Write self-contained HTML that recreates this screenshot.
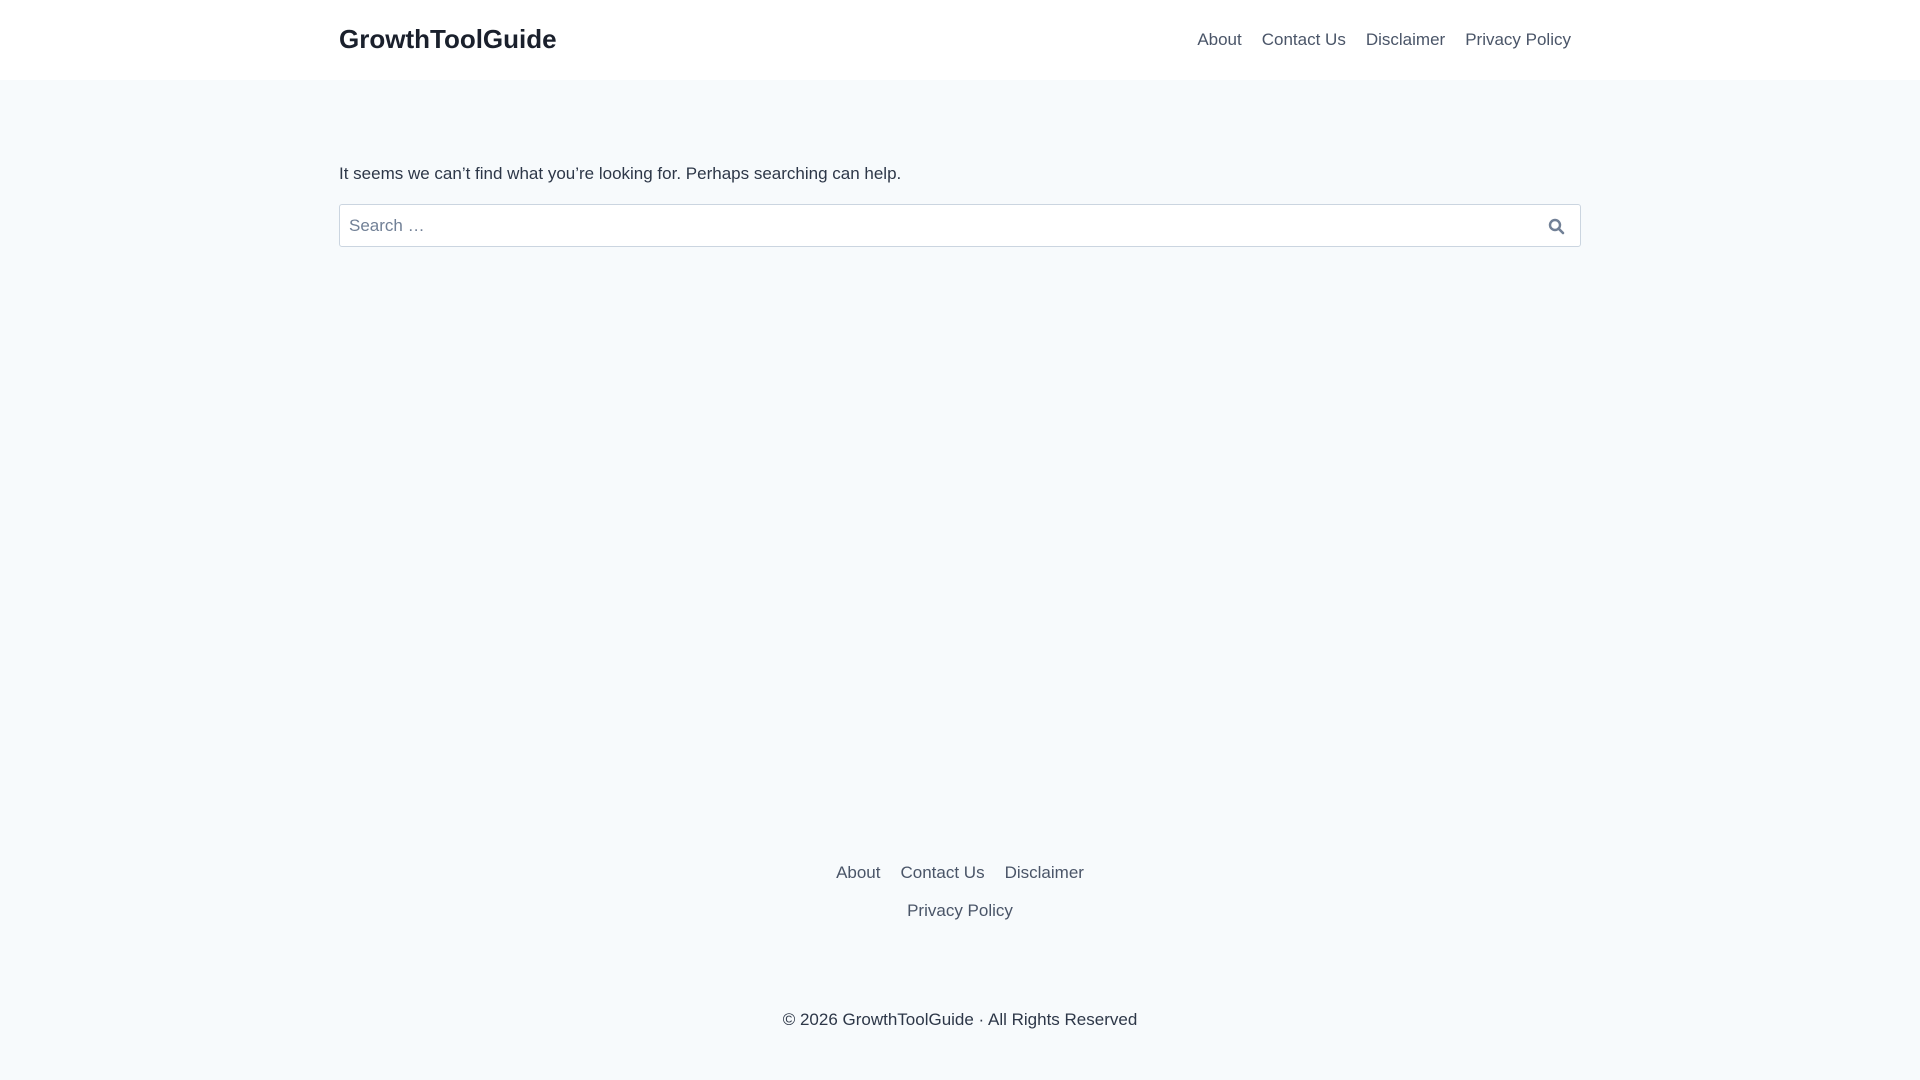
<!DOCTYPE html>
<html><head><meta charset="utf-8"><style>
*{box-sizing:border-box;margin:0;padding:0}
body{width:1920px;height:1080px;background:#f7fafc;font-family:"Liberation Sans",Arial,sans-serif;color:#2d3748;overflow:hidden;position:relative}
header{position:absolute;left:0;top:0;width:1920px;height:80px;background:#fff}
.logo{position:absolute;left:339px;top:22px;font-size:26px;font-weight:bold;color:#1a202c;line-height:34px}
nav.top{position:absolute;right:349px;top:29px;font-size:17px;color:#4a5568;line-height:22px}
nav.top span{margin-left:20px}
.msg{position:absolute;left:339px;top:163px;font-size:17px;line-height:22px;color:#2d3748}
.search{position:absolute;left:339px;top:204px;width:1242px;height:43px;background:#fff;border:1px solid #cbd5e0;border-radius:3px}
.search .ph{position:absolute;left:9px;top:11px;font-size:17px;color:#718096;line-height:20px}
.search svg{position:absolute;right:15px;top:13px}
.fnav{position:absolute;left:0;width:1920px;text-align:center;font-size:17px;color:#4a5568;line-height:22px}
.fnav span{margin:0 10px}
.copy{position:absolute;left:0;top:1009px;width:1920px;text-align:center;font-size:17px;color:#2d3748;line-height:22px}
</style></head><body>
<header><div class="logo">GrowthToolGuide</div>
<nav class="top"><span>About</span><span>Contact Us</span><span>Disclaimer</span><span>Privacy Policy</span></nav></header>
<div class="msg">It seems we can’t find what you’re looking for. Perhaps searching can help.</div>
<div class="search"><div class="ph">Search …</div>
<svg width="17" height="17" viewBox="0 0 17 17"><circle cx="7" cy="7" r="5" fill="none" stroke="#718096" stroke-width="2.4"/><path d="M10.5 10.5L15 15" stroke="#718096" stroke-width="2.6" stroke-linecap="round"/></svg></div>
<div class="fnav" style="top:862px"><span>About</span><span>Contact Us</span><span>Disclaimer</span></div>
<div class="fnav" style="top:900px"><span>Privacy Policy</span></div>
<div class="copy">© 2026 GrowthToolGuide · All Rights Reserved</div>
</body></html>
